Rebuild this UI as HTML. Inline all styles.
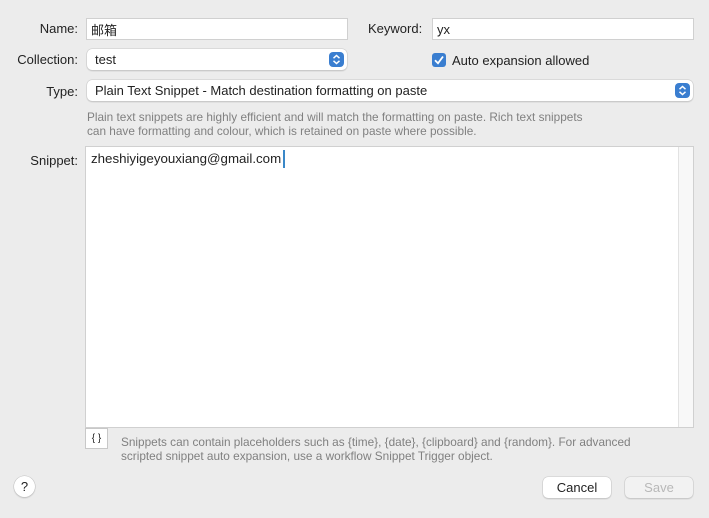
<!DOCTYPE html>
<html><head><style>
*{box-sizing:border-box;margin:0;padding:0}
body{width:709px;height:518px;background:#ececec;font-family:"Liberation Sans","Noto Sans CJK SC",sans-serif;font-size:13px;color:#222;position:relative;overflow:hidden;line-height:16px}
.a{position:absolute}
.lbl{text-align:right;width:78px;left:0}
.field{background:#fff;border:1px solid #d0d0d0;height:22px;padding:3px 4px;font-size:13px;line-height:16px}
.pop{background:#fff;border-radius:5px;box-shadow:0 0 0 0.5px #c8c8c8,0 1px 1.5px rgba(0,0,0,.2);height:21px;padding:3px 8px}
.arr{position:absolute;right:3px;top:3px;width:15px;height:15px;border-radius:4px;background:#3a7ed0}
.small{font-size:11.8px;color:#808080;line-height:14px;white-space:nowrap}
.btn{background:#fff;border-radius:5px;box-shadow:0 0 0 0.5px #c8c8c8,0 1px 1.5px rgba(0,0,0,.2);height:21px;text-align:center;padding-top:3px}
</style></head><body>
<div class="a lbl" style="top:21px">Name:</div>
<div class="a field" style="left:86px;top:18px;width:262px"><span style="font-family:'Noto Sans CJK SC',sans-serif;line-height:16px">邮箱</span></div>
<div class="a" style="left:368px;top:21px">Keyword:</div>
<div class="a field" style="left:432px;top:18px;width:262px">yx</div>

<div class="a lbl" style="top:52px">Collection:</div>
<div class="a pop" style="left:87px;top:49px;width:260px">test<div class="arr"><svg width="15" height="15"><path d="M4.5 6.2 7.5 3.5 10.5 6.2M4.5 8.8 7.5 11.5 10.5 8.8" fill="none" stroke="#fff" stroke-width="1.5"/></svg></div></div>
<div class="a" style="left:432px;top:53px;width:14px;height:14px;border-radius:3px;background:#3a7ed0"><svg width="14" height="14"><path d="M3 7.3 6 10.3 11 3.5" fill="none" stroke="#fff" stroke-width="1.8"/></svg></div>
<div class="a" style="left:452px;top:53px">Auto expansion allowed</div>

<div class="a lbl" style="top:84px">Type:</div>
<div class="a pop" style="left:87px;top:80px;width:606px">Plain Text Snippet - Match destination formatting on paste<div class="arr"><svg width="15" height="15"><path d="M4.5 6.2 7.5 3.5 10.5 6.2M4.5 8.8 7.5 11.5 10.5 8.8" fill="none" stroke="#fff" stroke-width="1.5"/></svg></div></div>
<div class="a small" style="left:87px;top:110px">Plain text snippets are highly efficient and will match the formatting on paste. Rich text snippets<br>can have formatting and colour, which is retained on paste where possible.</div>

<div class="a lbl" style="top:153px">Snippet:</div>
<div class="a" style="left:85px;top:146px;width:609px;height:282px;background:#fff;border:1px solid #d0d0d0"></div>
<div class="a" style="left:678px;top:147px;width:15px;height:280px;background:#f8f8f8;border-left:1px solid #e2e2e2"></div>
<div class="a" style="left:91px;top:151px;font-size:13.3px">zheshiyigeyouxiang@gmail.com</div>
<div class="a" style="left:283px;top:150px;width:2px;height:18px;background:#3a88c8"></div>

<div class="a" style="left:85px;top:428px;width:23px;height:21px;background:#fff;border:1px solid #c8c8c8;font-size:10px;text-align:center;padding-top:2px">{ }</div>
<div class="a small" style="left:121px;top:435px">Snippets can contain placeholders such as {time}, {date}, {clipboard} and {random}. For advanced<br>scripted snippet auto expansion, use a workflow Snippet Trigger object.</div>

<div class="a" style="left:14px;top:476px;width:21px;height:21px;border-radius:50%;background:#fff;box-shadow:0 0 0 0.5px #c0c0c0,0 1px 1.5px rgba(0,0,0,.2);text-align:center;padding-top:3px;font-size:13px">?</div>
<div class="a btn" style="left:543px;top:477px;width:68px">Cancel</div>
<div class="a btn" style="left:625px;top:477px;width:68px;background:#f2f2f2;color:#b8b8b8">Save</div>
</body></html>
